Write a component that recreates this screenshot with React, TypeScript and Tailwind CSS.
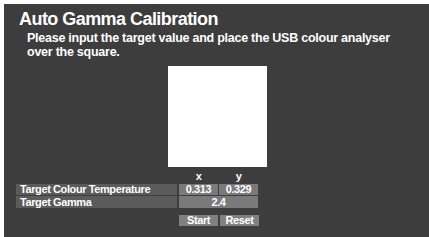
import React from "react";

const cell = "flex items-center text-[11px] font-bold leading-none tracking-[-0.4px] text-white";

export default function App() {
  return (
    <div className="h-[237px] w-[429px] bg-white pl-[4px] pt-[4px] font-['Liberation_Sans',Arial,sans-serif]">
      <div className="flex h-[233px] w-[425px] flex-col bg-[#3d3d3d]">
        <h1 className="ml-[15px] mt-[4px] text-[18px] font-bold leading-[22px] tracking-[-0.55px] text-white">
          Auto Gamma Calibration
        </h1>
        <p className="ml-[23px] mt-[2px] w-[380px] text-[12.5px] font-bold leading-[13.5px] tracking-[-0.25px] text-white">
          Please input the target value and place the USB colour analyser over the square.
        </p>
        <div className="ml-[164px] mt-[7px] h-[101px] w-[99px] bg-white" />

        <div className="ml-[12px] mt-[3px] flex flex-col">
          <div className="flex h-[12px]">
            <div className="w-[163px]" />
            <div className={`${cell} w-[39px] justify-center`}>x</div>
            <div className={`${cell} ml-px w-[39px] justify-center`}>y</div>
          </div>
          <div className="mt-[2px] flex h-[11px]">
            <div className={`${cell} w-[161px] bg-[#5b5b5b] pl-[4px]`}>Target Colour Temperature</div>
            <div className={`${cell} ml-[2px] w-[39px] justify-center bg-[#7a7a7a]`}>0.313</div>
            <div className={`${cell} ml-px w-[39px] justify-center bg-[#7a7a7a]`}>0.329</div>
          </div>
          <div className="mt-px flex h-[12px]">
            <div className={`${cell} w-[161px] bg-[#5b5b5b] pl-[4px]`}>Target Gamma</div>
            <div className={`${cell} ml-[2px] w-[79px] justify-center bg-[#7a7a7a]`}>2.4</div>
          </div>
          <div className="mt-[7px] flex h-[11px]">
            <div className="w-[163px]" />
            <div className={`${cell} w-[39px] justify-center bg-[#808080]`}>Start</div>
            <div className={`${cell} ml-[2px] w-[39px] justify-center bg-[#808080]`}>Reset</div>
          </div>
        </div>
      </div>
    </div>
  );
}
